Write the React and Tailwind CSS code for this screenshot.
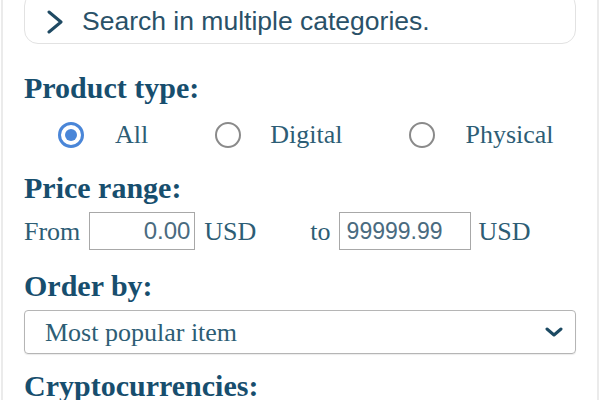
import React, { useState } from 'react';

const serif = { fontFamily: '"Liberation Serif", "Times New Roman", serif' };
const sans = { fontFamily: '"Liberation Sans", Arial, sans-serif' };

const types = [
  { id: 'all', label: 'All', ml: 'ml-[34px]', gap: 'mr-[31px]' },
  { id: 'digital', label: 'Digital', ml: 'ml-[67px]', gap: 'mr-[29px]' },
  { id: 'physical', label: 'Physical', ml: 'ml-[67px]', gap: 'mr-[30px]' },
];

const Radio = ({ checked }) => (
  <span
    className={`w-[26px] h-[26px] rounded-full flex items-center justify-center shrink-0 ${
      checked ? 'border-[3px] border-[#4a86d8]' : 'border-[2.5px] border-[#8a8a8a]'
    }`}
  >
    {checked && <span className="w-[12px] h-[12px] rounded-full bg-[#4a86d8]" />}
  </span>
);

const Heading = ({ children, className = '' }) => (
  <h2 className={`text-[30px] leading-[32px] font-bold text-[#174e6e] ${className}`} style={serif}>
    {children}
  </h2>
);

export default function App() {
  const [type, setType] = useState('all');

  return (
    <div className="w-[600px] h-[400px] overflow-hidden bg-white">
      <div className="h-full ml-[1px] mr-[1px] border-l-2 border-r-2 border-[#ebebeb] px-[21px] flex flex-col">
        {/* Categories toggle */}
        <button
          type="button"
          className="mt-[-8px] h-[52px] shrink-0 w-full rounded-[14px] border-[1.5px] border-[#e2e2e2] flex items-center pl-[19px] text-left"
        >
          <svg width="22" height="24" viewBox="0 0 22 24" className="mr-[16px] mt-[8px] shrink-0">
            <polyline points="5,2 17,12 5,22" fill="none" stroke="#1f4a63" strokeWidth="3" strokeLinecap="round" strokeLinejoin="round" />
          </svg>
          <span className="text-[26.5px] text-[#2a5168] mt-[8px]" style={sans}>
            Search in multiple categories.
          </span>
        </button>

        {/* Product type */}
        <Heading className="mt-[28px]">Product type:</Heading>
        <div className="mt-[16px] h-[30px] flex items-center shrink-0">
          {types.map((t) => (
            <label
              key={t.id}
              className={`flex items-center cursor-pointer ${t.ml}`}
              onClick={() => setType(t.id)}
            >
              <span className={t.gap}>
                <Radio checked={type === t.id} />
              </span>
              <span className="text-[26px] leading-[30px] text-[#2d5d75]" style={serif}>
                {t.label}
              </span>
            </label>
          ))}
        </div>

        {/* Price range */}
        <Heading className="mt-[22px]">Price range:</Heading>
        <div className="mt-[8px] h-[38px] flex items-center shrink-0 text-[26px] text-[#2d5d75]" style={serif}>
          <span>From</span>
          <input
            defaultValue="0.00"
            className="ml-[9px] w-[106px] h-[38px] border border-[#a8a8a8] text-right pr-[4px] text-[24px] text-[#4a6b80] outline-none"
            style={sans}
          />
          <span className="ml-[9px]">USD</span>
          <span className="ml-[54px]">to</span>
          <input
            defaultValue="99999.99"
            className="ml-[8px] w-[132px] h-[38px] border border-[#a8a8a8] pl-[7px] text-[23px] text-[#4a6b80] outline-none"
            style={sans}
          />
          <span className="ml-[8px]">USD</span>
        </div>

        {/* Order by */}
        <Heading className="mt-[20px]">Order by:</Heading>
        <div className="mt-[8px] h-[44px] shrink-0 w-full rounded-[4px] border border-[#b5b5b5] flex items-center justify-between pl-[20px] pr-[12px] shadow-[0_1px_1px_rgba(0,0,0,0.08)]">
          <span className="text-[26px] text-[#2d5d75]" style={serif}>Most popular item</span>
          <svg width="18" height="12" viewBox="0 0 18 12">
            <polyline points="2,3 9,9 16,3" fill="none" stroke="#1c4a63" strokeWidth="3" strokeLinecap="round" strokeLinejoin="round" />
          </svg>
        </div>

        {/* Cryptocurrencies */}
        <Heading className="mt-[16px]">Cryptocurrencies:</Heading>
      </div>
    </div>
  );
}
